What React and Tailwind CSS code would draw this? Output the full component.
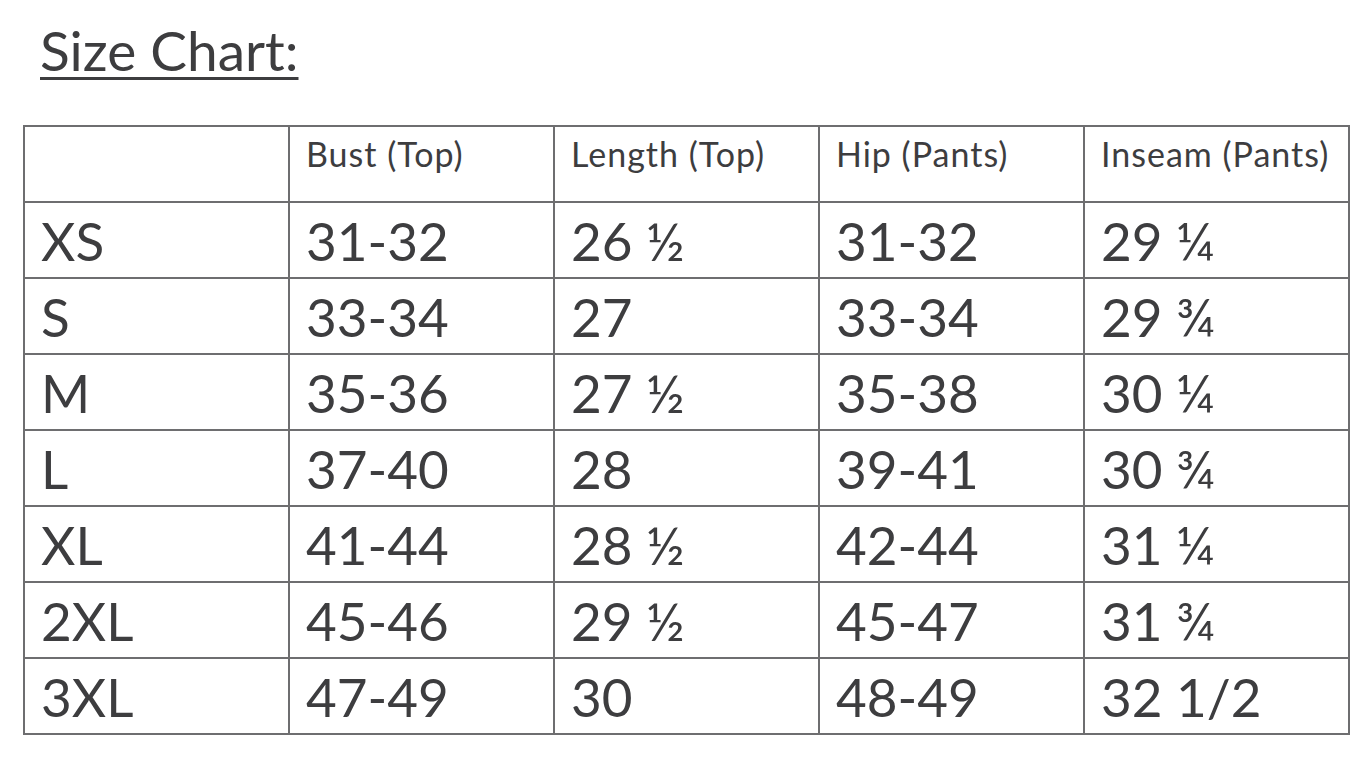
const headers = ['', 'Bust (Top)', 'Length (Top)', 'Hip (Pants)', 'Inseam (Pants)']

const rows = [
  ['XS', '31-32', '26 ½', '31-32', '29 ¼'],
  ['S', '33-34', '27', '33-34', '29 ¾'],
  ['M', '35-36', '27 ½', '35-38', '30 ¼'],
  ['L', '37-40', '28', '39-41', '30 ¾'],
  ['XL', '41-44', '28 ½', '42-44', '31 ¼'],
  ['2XL', '45-46', '29 ½', '45-47', '31 ¾'],
  ['3XL', '47-49', '30', '48-49', '32 1/2'],
]

export default function App() {
  return (
    <div
      className="w-[1369px] h-[757px] bg-white text-[#3d3d3f] overflow-hidden pl-[23px] pt-[18px]"
      style={{ fontFamily: 'Lato, "Open Sans", sans-serif' }}
    >
      <h1 className="ml-[17px] text-[55px] leading-[64px] underline decoration-[3px] underline-offset-[6px] w-fit">
        Size Chart:
      </h1>

      <table className="mt-[43px] border-collapse table-fixed w-[1325px]">
        <thead>
          <tr className="h-[76px]">
            {headers.map((h, i) => (
              <th
                key={i}
                className="w-[265px] border-2 border-[#6e6e70] align-top text-left font-normal text-[34px] leading-[40px] tracking-[1px] pl-[16px] pt-[7px]"
              >
                {h}
              </th>
            ))}
          </tr>
        </thead>
        <tbody>
          {rows.map((r, ri) => (
            <tr key={ri} className="h-[76px]">
              {r.map((c, ci) => (
                <td
                  key={ci}
                  className="border-2 border-[#6e6e70] align-top text-left text-[53px] leading-[64px] pl-[16px] pt-[6px]"
                >
                  {c}
                </td>
              ))}
            </tr>
          ))}
        </tbody>
      </table>
    </div>
  )
}
